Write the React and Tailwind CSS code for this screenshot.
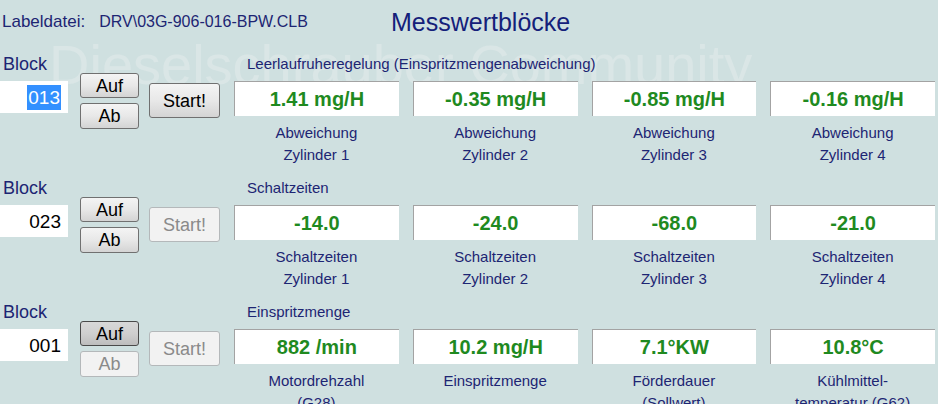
import React from 'react';

const blocks = [
  {
    nr: '013',
    selected: true,
    title: 'Leerlaufruheregelung (Einspritzmengenabweichung)',
    start: true,
    auf: 'normal',
    ab: 'normal',
    values: [
      { value: '1.41 mg/H', label: ['Abweichung', 'Zylinder 1'] },
      { value: '-0.35 mg/H', label: ['Abweichung', 'Zylinder 2'] },
      { value: '-0.85 mg/H', label: ['Abweichung', 'Zylinder 3'] },
      { value: '-0.16 mg/H', label: ['Abweichung', 'Zylinder 4'] }
    ]
  },
  {
    nr: '023',
    selected: false,
    title: 'Schaltzeiten',
    start: false,
    auf: 'normal',
    ab: 'normal',
    values: [
      { value: '-14.0', label: ['Schaltzeiten', 'Zylinder 1'] },
      { value: '-24.0', label: ['Schaltzeiten', 'Zylinder 2'] },
      { value: '-68.0', label: ['Schaltzeiten', 'Zylinder 3'] },
      { value: '-21.0', label: ['Schaltzeiten', 'Zylinder 4'] }
    ]
  },
  {
    nr: '001',
    selected: false,
    title: 'Einspritzmenge',
    start: false,
    auf: 'pressed',
    ab: 'disabled',
    values: [
      { value: '882 /min', label: ['Motordrehzahl', '(G28)'] },
      { value: '10.2 mg/H', label: ['Einspritzmenge'] },
      { value: '7.1°KW', label: ['Förderdauer', '(Sollwert)'] },
      { value: '10.8°C', label: ['Kühlmittel-', 'temperatur (G62)'] }
    ]
  }
];

function WinButton({ children, state = 'normal', className = '' }) {
  const look = {
    normal: 'border-[#707070] bg-gradient-to-b from-[#f4f4f4] via-[#e8e8e8] to-[#d4d4d4] text-black',
    pressed: 'border-[#4a4a4a] bg-gradient-to-b from-[#d8d8d8] via-[#cfcfcf] to-[#bdbdbd] text-black',
    disabled: 'border-[#b4b8ba] bg-[#f2f2f2] text-[#8a8a8a]'
  }[state];
  return (
    <div className={`flex items-center justify-center rounded-[3px] border text-[18px] leading-none ${look} ${className}`}>
      {children}
    </div>
  );
}

function BlockRow({ block }) {
  return (
    <div className="flex h-[124px]">
      <div className="w-[80px]">
        <div className="h-[24px] pl-[3px] text-[18px] leading-[24px] text-[#1d2573]">Block</div>
        <div className="mt-[5px] flex h-[32px] w-[68px] items-center justify-end bg-white pr-[7px] text-[19px] leading-none text-black">
          {block.selected ? (
            <span className="bg-[#3390ff] px-[1px] py-[3px] text-white">{block.nr}</span>
          ) : (
            <span>{block.nr}</span>
          )}
        </div>
      </div>
      <div className="w-[69px] pt-[21px]">
        <WinButton state={block.auf} className="h-[25px] w-[59px]">Auf</WinButton>
        <WinButton state={block.ab} className="mt-[5px] h-[26px] w-[59px]">Ab</WinButton>
      </div>
      <div className="w-[85px] pt-[31px]">
        <WinButton state={block.start ? 'normal' : 'disabled'} className="h-[35px] w-[71px]">Start!</WinButton>
      </div>
      <div className="w-[701px]">
        <div className="h-[24px] pl-[13px] text-[15px] leading-[24px] text-[#1d2573]">{block.title}</div>
        <div className="mt-[5px] grid grid-cols-4 gap-x-[14px]">
          {block.values.map((v, i) => (
            <div key={i} className="flex flex-col items-center">
              <div className="flex h-[35px] w-full items-center justify-center border-l border-t border-[#a3a3a3] border-b-[#e6e6e6] border-r-[#e6e6e6] bg-white text-[20px] font-bold text-[#1f8a1f]">
                {v.value}
              </div>
              <div className="mt-[6px] text-center text-[15px] leading-[22px] text-[#1d2573]">
                {v.label.map((l, j) => (
                  <div key={j}>{l}</div>
                ))}
              </div>
            </div>
          ))}
        </div>
      </div>
    </div>
  );
}

export default function App() {
  return (
    <div className="relative h-[404px] w-[938px] overflow-hidden bg-[#cfe0e0] font-['Liberation_Sans',Arial,sans-serif]">
      {/* watermark */}
      <div className="pointer-events-none absolute left-[49px] top-[37px] select-none whitespace-nowrap text-[56px] leading-none text-[#dae6e6]">
        Dieselschrauber Community
      </div>

      <div className="relative">
        <div className="flex h-[52px] items-start pt-[9px]">
          <div className="flex w-[391px] items-baseline">
            <span className="ml-[2px] text-[17px] leading-[26px] text-[#1d2573]">Labeldatei:</span>
            <span className="ml-[14px] text-[16px] leading-[26px] text-[#1d2573]">DRV\03G-906-016-BPW.CLB</span>
          </div>
          <span className="text-[25px] leading-[26px] text-[#14207a]">Messwertblöcke</span>
        </div>
        {blocks.map((b) => (
          <BlockRow key={b.nr} block={b} />
        ))}
      </div>
    </div>
  );
}
